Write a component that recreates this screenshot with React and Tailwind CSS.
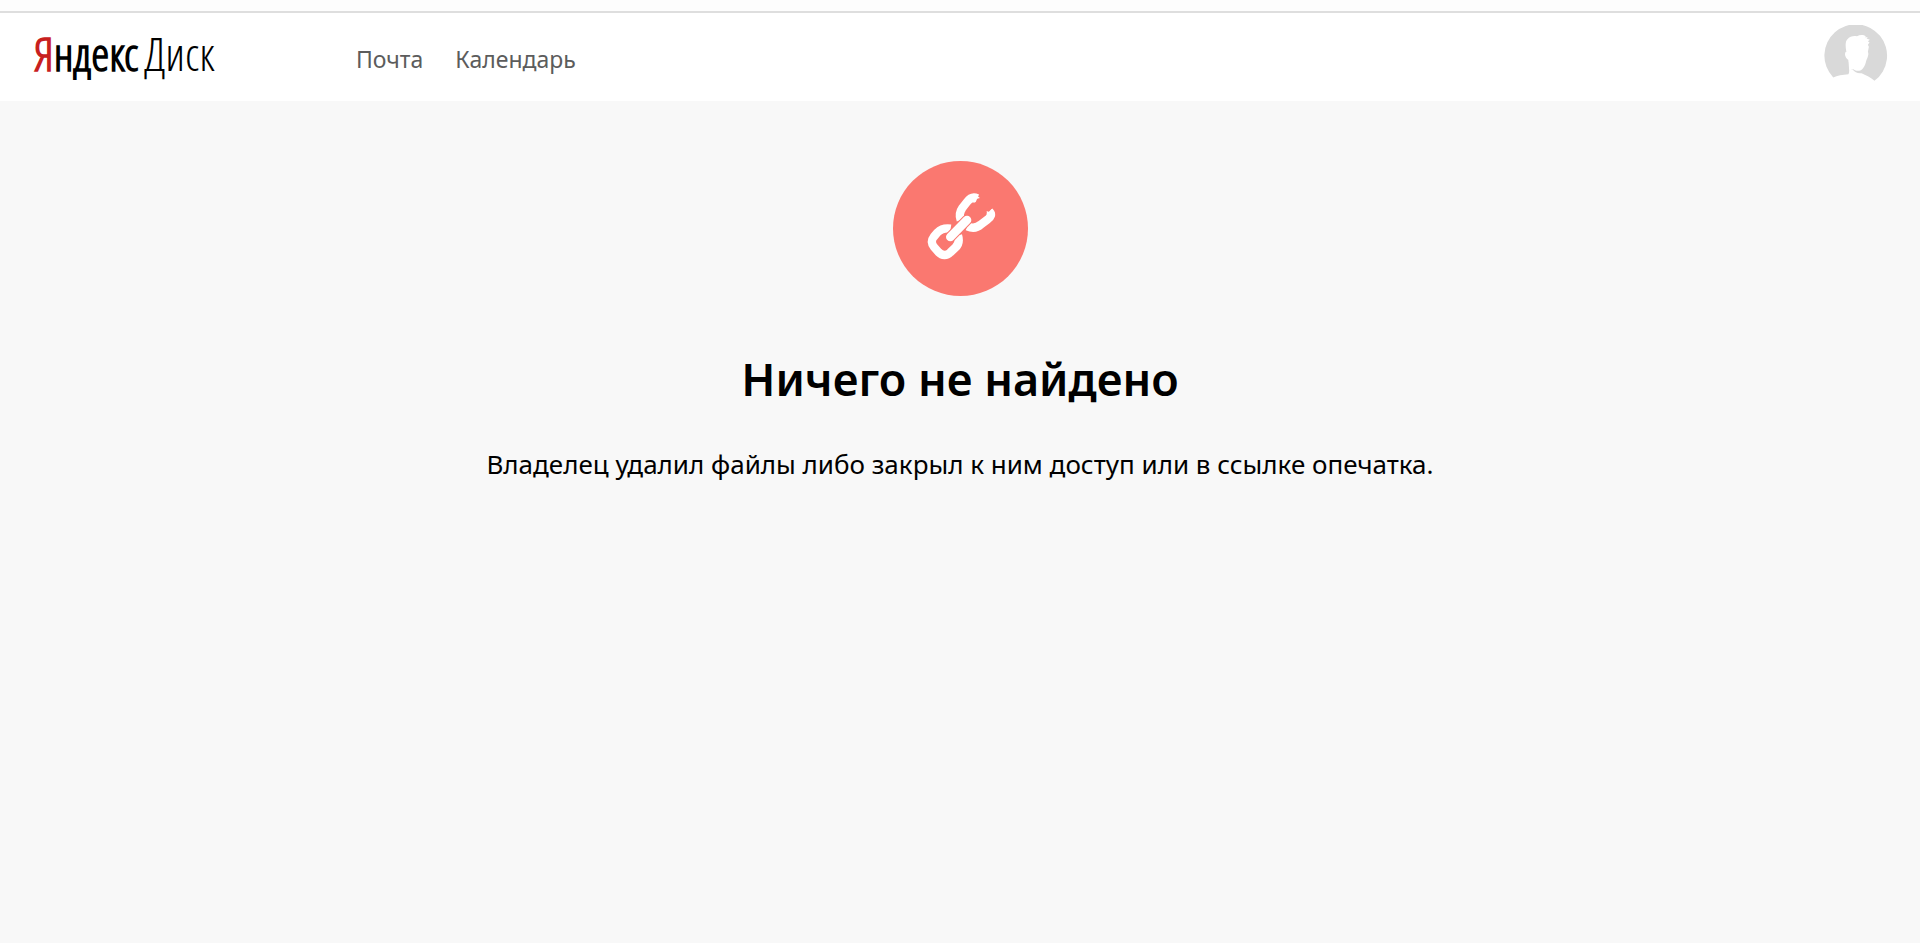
import React from 'react';

const navLinks = [
  { title: 'Почта', href: '#mail' },
  { title: 'Календарь', href: '#calendar' },
];

function Logo() {
  return (
    <a href="#disk" className="flex w-81 items-baseline gap-1.5 pb-2 pl-0.5 font-['Open_Sans_Condensed_Light','Roboto_Condensed',sans-serif] text-[46px] leading-[48px] text-black">
      <span className="font-bold"><span className="text-[#c8201e]">Я</span>ндекс</span>
      <span className="font-light">Диск</span>
    </a>
  );
}

function Avatar() {
  return (
    <button type="button" aria-label="Профиль" className="ml-auto">
      <svg className="size-16" viewBox="70 74 194 194">
        <path fill="#d9d9d9" d="M98 233A95 95 0 1 1 223 243C210 231 196 226 184 220C174 222 162 217 157 209L152 208C146 214 146 220 144 223C126 224 110 227 98 233Z" />
        <path fill="#fff" d="M138 156C135 138 134 123 141 117C148 108 160 106 170 108C178 103 190 103 197 108L194 111L203 111L199 115L209 119L203 123L208 127L203 134L206 140L203 156C207 162 202 174 198 182C195 197 188 208 180 212C171 215 161 211 156 205C149 199 146 190 144 180C137 176 130 163 136 155Z" />
        <path fill="#fff" d="M144 179L147 222L153 208L160 208Z" />
      </svg>
    </button>
  );
}

function BrokenLink() {
  return (
    <svg className="size-[135px]" viewBox="39 33 405 405" fill="none" aria-hidden="true">
      <circle cx="241.5" cy="235.500" r="202.500" fill="#fa7870" />
      <g stroke="#fff" strokeWidth="25">
        <path d="M212 236C192 233 181 239 172 248L161 261C153 271 154 282 162 291L175 306C187 318 200 318 211 307L226 293C236 284 239 273 234 256" />
        <path d="M242 210C236 194 240 184 247 174L261 156C270 144 281 140 292 145" />
        <path d="M328 184C337 194 333 201 323 208L303 223C290 235 278 236 262 229" />
      </g>
      {/* worn edges where the upper link is broken */}
      <path fill="#fff" d="M285 133L300 144L288 147L284 158L274 156Z" />
      <path fill="#fff" d="M334 177L345 190L335 208L312 203L321 194L320 183L329 187Z" />
      {/* the middle link is cut out of the outer two */}
      <path stroke="#fa7870" strokeWidth="32" strokeLinecap="round" d="M211 261L261 210" />
      <path stroke="#fff" strokeWidth="26" strokeLinecap="round" d="M211 261L261 210" />
    </svg>
  );
}

export default function App() {
  return (
    <div className="flex min-h-screen flex-col bg-[#f8f8f8] font-['Noto_Sans','Open_Sans',sans-serif] text-black">
      <div className="h-[13px] border-b-2 border-[#dedede] bg-[#fdfdfd]"></div>
      <header className="flex h-22 items-center bg-white px-8">
        <Logo />
        <nav className="flex gap-8 pt-1 text-[23px] leading-[32px] text-[#5c5c5c]">
          {navLinks.map((link) => (
            <a key={link.href} href={link.href}>{link.title}</a>
          ))}
        </nav>
        <Avatar />
      </header>

      <main className="flex flex-col items-center pt-15 text-center">
        <BrokenLink />
        <h1 className="mt-12 text-[45px] leading-[70px] font-semibold">Ничего не найдено</h1>
        <p className="mt-8 text-[26px] leading-[36px]">
          Владелец удалил файлы либо закрыл к ним доступ или в ссылке опечатка.
        </p>
      </main>
    </div>
  );
}
